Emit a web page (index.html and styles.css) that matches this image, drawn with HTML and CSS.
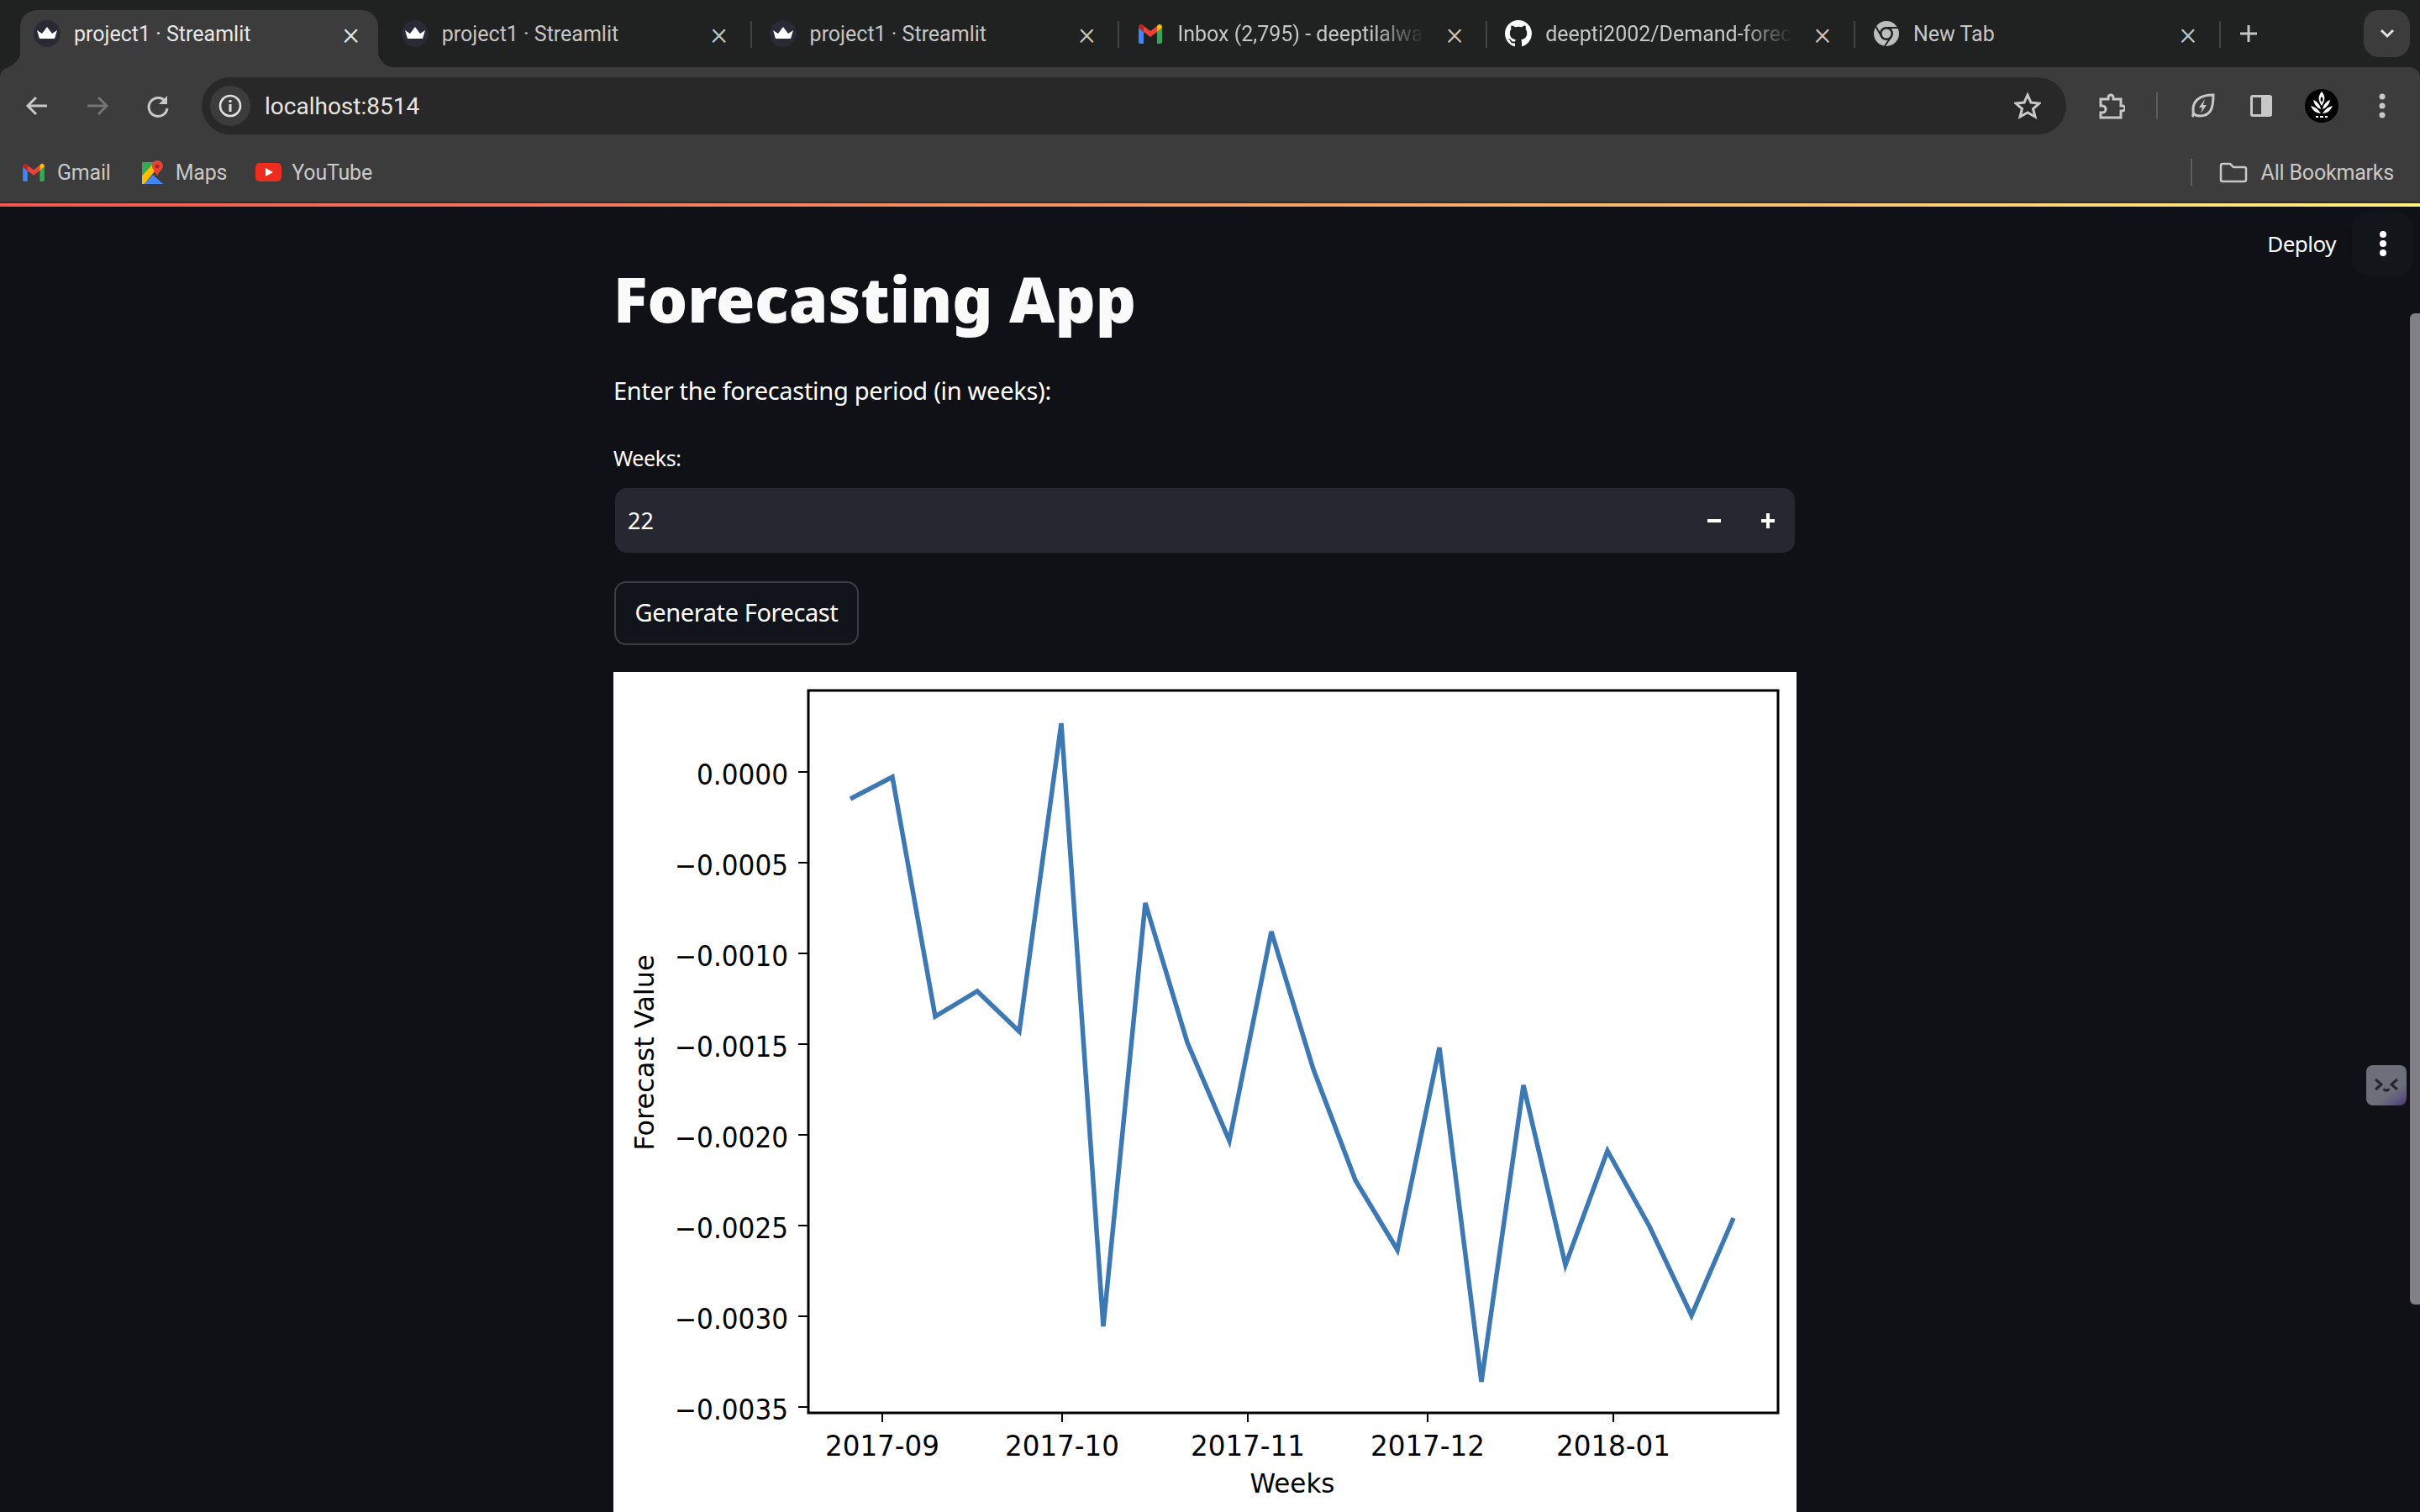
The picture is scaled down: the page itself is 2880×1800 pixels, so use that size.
FILE: index.html
```html
<!DOCTYPE html>
<html lang="en">
<head>
    <meta charset="UTF-8">
    <meta name="viewport" content="width=device-width, initial-scale=1.0">
    <title>project1 · Streamlit</title>
    <link rel="stylesheet" href="styles.css">
</head>
<body>
    <svg class="icon-defs" width="0" height="0">
        <symbol id="crown" viewBox="0 0 32 32">
            <ellipse cx="16" cy="16" rx="16" ry="16" fill="#2a2a36"/>
            <path fill="#fff" d="M4 12l6 4 6-8 6 8 6-4-3 10H7z"/>
        </symbol>
        <symbol id="gmail" viewBox="0 0 28 24">
            <path fill="#4285f4" d="M0 5v17a2 2 0 0 0 2 2h4V10z"/>
            <path fill="#34a853" d="M22 10v14h4a2 2 0 0 0 2-2V5z"/>
            <path fill="#ea4335" d="M6 10l8 6 8-6V3l-8 6-8-6z"/>
            <path fill="#fbbc04" d="M22 3v7l6-5V4c0-2.5-3-4-5-2.5z"/>
            <path fill="#c5221f" d="M0 5l6 5V3L5 1.5C3 0 0 1.5 0 4z"/>
        </symbol>
    </svg>

    <!-- Browser chrome -->
    <header class="browser">
        <div class="tab-strip">
            <div class="tab tab-active">
                <svg class="favicon" width="32" height="32"><use href="#crown"/></svg>
                <span class="tab-title">project1 · Streamlit</span>
                <span class="tab-close">×</span>
            </div>
            <i class="tab-sep tab-sep-hidden"></i>
            <div class="tab">
                <svg class="favicon" width="32" height="32"><use href="#crown"/></svg>
                <span class="tab-title">project1 · Streamlit</span>
                <span class="tab-close">×</span>
            </div>
            <i class="tab-sep"></i>
            <div class="tab">
                <svg class="favicon" width="32" height="32"><use href="#crown"/></svg>
                <span class="tab-title">project1 · Streamlit</span>
                <span class="tab-close">×</span>
            </div>
            <i class="tab-sep"></i>
            <div class="tab">
                <svg class="favicon" width="32" height="24"><use href="#gmail"/></svg>
                <span class="tab-title tab-title-fade">Inbox (2,795) - deeptilalwa</span>
                <span class="tab-close">×</span>
            </div>
            <i class="tab-sep"></i>
            <div class="tab">
                <svg class="favicon" width="32" height="32" viewBox="0 0 16 16">
                    <path fill="#fff" d="M8 0C3.58 0 0 3.58 0 8c0 3.54 2.29 6.53 5.47 7.59.4.07.55-.17.55-.38 0-.19-.01-.82-.01-1.49-2.01.37-2.53-.49-2.69-.94-.09-.23-.48-.94-.82-1.13-.28-.15-.68-.52-.01-.53.63-.01 1.08.58 1.23.82.72 1.21 1.87.87 2.33.66.07-.52.28-.87.51-1.07-1.78-.2-3.64-.89-3.64-3.95 0-.87.31-1.59.82-2.15-.08-.2-.36-1.02.08-2.12 0 0 .67-.21 2.2.82.64-.18 1.32-.27 2-.27s1.36.09 2 .27c1.53-1.04 2.2-.82 2.2-.82.44 1.1.16 1.92.08 2.12.51.56.82 1.27.82 2.15 0 3.07-1.87 3.75-3.65 3.95.29.25.54.73.54 1.48 0 1.07-.01 1.93-.01 2.2 0 .21.15.46.55.38A8.013 8.013 0 0016 8c0-4.42-3.58-8-8-8z"/>
                </svg>
                <span class="tab-title tab-title-fade">deepti2002/Demand-forec</span>
                <span class="tab-close">×</span>
            </div>
            <i class="tab-sep"></i>
            <div class="tab tab-last">
                <svg class="favicon" width="32" height="32" viewBox="0 0 32 32">
                    <circle cx="16" cy="16" r="15" fill="#bdbdbd"/>
                    <path stroke="#202121" stroke-width="2" fill="none" d="M16 9h14M10 19L3 7M22 19l-8 12"/>
                    <circle cx="16" cy="16" r="8" fill="#202121"/>
                    <circle cx="16" cy="16" r="5.5" fill="#bdbdbd"/>
                </svg>
                <span class="tab-title">New Tab</span>
                <span class="tab-close">×</span>
            </div>
            <i class="tab-sep"></i>
            <span class="new-tab">
                <svg width="22" height="22" viewBox="0 0 22 22"><path stroke="#c4c4c4" stroke-width="3" d="M11 1v20M1 11h20"/></svg>
            </span>
            <span class="tab-search">
                <svg width="18" height="12" viewBox="0 0 18 12"><path stroke="#e0e0e0" stroke-width="3" fill="none" d="M2 2l7 7 7-7"/></svg>
            </span>
        </div>

        <div class="toolbar">
            <svg class="nav-icon" width="32" height="32" viewBox="0 0 32 32"><path stroke="#c8c8c8" stroke-width="3" fill="none" d="M28 16H6M15 6L5 16l10 10"/></svg>
            <svg class="nav-icon" width="32" height="32" viewBox="0 0 32 32"><path stroke="#747474" stroke-width="3" fill="none" d="M4 16h22M17 6l10 10-10 10"/></svg>
            <svg class="nav-icon" width="32" height="32" viewBox="0 0 32 32"><path stroke="#c8c8c8" stroke-width="3" fill="none" d="M25 11a11 11 0 1 0 2 8"/><path fill="#c8c8c8" d="M27 4v10H17z"/></svg>
            <div class="omnibox">
                <span class="site-info">
                    <svg width="28" height="28" viewBox="0 0 28 28">
                        <circle cx="14" cy="14" r="12" stroke="#e0e0e0" stroke-width="2.6" fill="none"/>
                        <path stroke="#e0e0e0" stroke-width="3" d="M14 12v9M14 7v3"/>
                    </svg>
                </span>
                <span class="url">localhost:8514</span>
                <svg class="star" width="32" height="32" viewBox="0 0 32 32"><path stroke="#c8c8c8" stroke-width="3" fill="none" d="M16 3l4 9 10 1-7.500 6.500L25 29l-9-5-9 5 2.500-9.500L2 13l10-1z"/></svg>
            </div>
            <div class="toolbar-actions">
                <svg width="32" height="32" viewBox="0 0 32 32"><path stroke="#c8c8c8" stroke-width="3" fill="none" d="M3 8h9V6a3 3 0 0 1 6 0v2h9v8h2a3 3 0 0 1 0 6h-2v8H3v-6h2a4 4 0 0 0 0-8H3z"/></svg>
                <i class="toolbar-sep"></i>
                <svg width="32" height="32" viewBox="0 0 32 32"><path stroke="#c8c8c8" stroke-width="3" fill="none" d="M4 29c2-2 1-4 1-9C5 10 13 3 29 3c0 16-3 25-16 25-4 0-6-1-7-3"/><path fill="#c8c8c8" d="M19 8l-7 10h4l-2 7 7-10h-4z"/></svg>
                <svg width="32" height="32" viewBox="0 0 32 32"><rect x="3" y="3" width="26" height="26" rx="3" fill="#c8c8c8"/><rect x="6" y="6" width="10" height="20" fill="#3c3c3c"/></svg>
                <svg class="avatar" width="40" height="40" viewBox="0 0 40 40">
                    <circle cx="20" cy="20" r="20" fill="#000"/>
                    <path fill="#fff" fill-rule="evenodd" d="M20 3c4 5 5 9 0 17-5-8-4-12 0-17zm0 6c-2 2-2 4 0 7 2-3 2-5 0-7z"/>
                    <path fill="#fff" d="M10 13c5 2 8 6 9 11-5-2-8-6-9-11zm20 0c-5 2-8 6-9 11 5-2 8-6 9-11zM7 20c5 1 9 4 12 9-6 0-10-4-12-9zm26 0c-5 1-9 4-12 9 6 0 10-4 12-9zM13 32h3v2h-3zm5 0h4v2h-4zm6 0h3v2h-3z"/>
                </svg>
                <svg class="toolbar-menu" width="12" height="32" viewBox="0 0 12 32"><circle cx="6" cy="5" r="3.500" fill="#c8c8c8"/><circle cx="6" cy="16" r="3.500" fill="#c8c8c8"/><circle cx="6" cy="27" r="3.500" fill="#c8c8c8"/></svg>
            </div>
        </div>

        <div class="bookmarks">
            <a class="bookmark"><svg width="28" height="22"><use href="#gmail"/></svg>Gmail</a>
            <a class="bookmark bookmark-maps">
                <svg width="26" height="28" viewBox="0 0 26 28">
                    <path fill="#34a853" d="M1 2h15L1 18z"/>
                    <path fill="#fbbc04" d="M1 18L16 2l4 6L4 28H1z"/>
                    <path fill="#4285f4" d="M4 28l10-11 12 11z"/>
                    <path fill="#ea4335" d="M19 0c4 0 7 3 7 6.500 0 4-5 7-7 12-2-5-6-8-6-12C13 3 15 0 19 0z"/>
                    <circle cx="19" cy="7" r="2.500" fill="#a5281b"/>
                </svg>Maps
            </a>
            <a class="bookmark bookmark-yt">
                <svg width="31" height="22" viewBox="0 0 31 22">
                    <rect width="31" height="22" rx="5" fill="#ee2d1f"/>
                    <path fill="#fff" d="M12 6l9 5-9 5z"/>
                </svg>YouTube
            </a>
            <i class="bookmarks-sep"></i>
            <a class="bookmark bookmark-all">
                <svg width="34" height="25" viewBox="0 0 34 25"><path stroke="#c8c8c8" stroke-width="2.500" fill="none" d="M2 4a2 2 0 0 1 2-2h9l4 4h13a2 2 0 0 1 2 2v13a2 2 0 0 1-2 2H4a2 2 0 0 1-2-2z"/></svg>All Bookmarks
            </a>
        </div>
        <div class="decoration"></div>
    </header>

    <!-- Streamlit app -->
    <div class="app">
        <div class="app-header">
            <span class="deploy">Deploy</span>
            <span class="main-menu">
                <svg width="12" height="32" viewBox="0 0 12 32"><circle cx="6" cy="5" r="4" fill="#fff"/><circle cx="6" cy="16" r="4" fill="#fff"/><circle cx="6" cy="27" r="4" fill="#fff"/></svg>
            </span>
        </div>
        <main class="content">
            <h1>Forecasting App</h1>
            <p class="intro">Enter the forecasting period (in weeks):</p>
            <label class="field-label">Weeks:</label>
            <div class="number-input">
                <span class="number-value">22</span>
                <span class="stepper">
                    <svg width="18" height="18" viewBox="0 0 18 18"><path stroke="#fff" stroke-width="4" d="M1 9h16"/></svg>
                    <svg width="18" height="18" viewBox="0 0 18 18"><path stroke="#fff" stroke-width="4" d="M1 9h16M9 0v18"/></svg>
                </span>
            </div>
            <button class="generate">Generate Forecast</button>

            <div class="chart">
                <svg class="plot" width="1408" height="1000" viewBox="730 800 1408 1000">
                    <rect class="axes" x="962" y="822" width="1154" height="860"/>
                    <path class="ticks" d="M950 919h12M950 1027h12M950 1135h12M950 1243h12M950 1351h12M950 1459h12M950 1567h12M950 1675h12M1050 1682v11M1264 1682v11M1485 1682v11M1699 1682v11M1920 1682v11"/>
                    <polyline class="series" points="1012,951 1062,925 1113,1210 1163,1180 1213,1228 1263,861 1313,1579 1363,1075 1413,1241 1463,1358 1513,1109 1563,1273 1613,1405 1663,1488 1713,1247 1763,1645 1813,1292 1863,1506 1913,1370 1963,1460 2013,1566 2063,1450"/>
                    <text class="tick-y" x="938" y="934" textLength="109" lengthAdjust="spacingAndGlyphs">0.0000</text>
                    <text class="tick-y" x="938" y="1042" textLength="135" lengthAdjust="spacingAndGlyphs">−0.0005</text>
                    <text class="tick-y" x="938" y="1150" textLength="135" lengthAdjust="spacingAndGlyphs">−0.0010</text>
                    <text class="tick-y" x="938" y="1258" textLength="135" lengthAdjust="spacingAndGlyphs">−0.0015</text>
                    <text class="tick-y" x="938" y="1366" textLength="135" lengthAdjust="spacingAndGlyphs">−0.0020</text>
                    <text class="tick-y" x="938" y="1474" textLength="135" lengthAdjust="spacingAndGlyphs">−0.0025</text>
                    <text class="tick-y" x="938" y="1582" textLength="135" lengthAdjust="spacingAndGlyphs">−0.0030</text>
                    <text class="tick-y" x="938" y="1690" textLength="135" lengthAdjust="spacingAndGlyphs">−0.0035</text>
                    <text class="tick-x" x="1050" y="1733" textLength="136" lengthAdjust="spacingAndGlyphs">2017-09</text>
                    <text class="tick-x" x="1264" y="1733" textLength="136" lengthAdjust="spacingAndGlyphs">2017-10</text>
                    <text class="tick-x" x="1485" y="1733" textLength="136" lengthAdjust="spacingAndGlyphs">2017-11</text>
                    <text class="tick-x" x="1699" y="1733" textLength="136" lengthAdjust="spacingAndGlyphs">2017-12</text>
                    <text class="tick-x" x="1920" y="1733" textLength="136" lengthAdjust="spacingAndGlyphs">2018-01</text>
                    <text class="axis-label" x="1538" y="1777" textLength="101" lengthAdjust="spacingAndGlyphs">Weeks</text>
                    <text class="axis-label" transform="translate(778 1253) rotate(-90)">Forecast Value</text>
                </svg>
            </div>
        </main>

        <div class="scroll-thumb"></div>
        <div class="badge">
            <svg width="30" height="18" viewBox="0 0 30 18"><path stroke="#25262f" stroke-width="3" fill="none" d="M2 2l7 6-7 6M28 2l-7 6 7 6M12 13c1 3 5 3 6 0"/></svg>
        </div>
    </div>
</body>
</html>
```

FILE: styles.css
```css
* {
    box-sizing: border-box;
}

html, body {
    margin: 0;
    height: 100%;
    overflow: hidden;
}

body {
    background: #0f1116;
    color: #fff;
    font-family: 'Noto Sans', sans-serif;
}

.icon-defs {
    display: block;
    height: 0;
}

/* Browser chrome */
.browser {
    background: #202121;
    font-family: 'Roboto', sans-serif;
}

.tab-strip {
    display: flex;
    align-items: flex-start;
    height: 80px;
    padding: 12px 0 0 24px;
}

.tab {
    position: relative;
    display: flex;
    align-items: center;
    flex: none;
    width: 425.8px;
    height: 56px;
    padding: 0 22px 0 16px;
    font-size: 25px;
    color: #c6c6c6;
}

.tab-last {
    width: 423px;
}

.tab-active {
    height: 68px;
    padding-bottom: 12px;
    background: #3c3c3c;
    border-radius: 20px 20px 0 0;
    color: #e8e8e8;
}

.tab-active::before,
.tab-active::after {
    content: "";
    position: absolute;
    bottom: 0;
    width: 20px;
    height: 20px;
}

.tab-active::before {
    left: -20px;
    background: radial-gradient(circle at 0 0, transparent 20px, #3c3c3c 20.5px);
}

.tab-active::after {
    right: -20px;
    background: radial-gradient(circle at 100% 0, transparent 20px, #3c3c3c 20.5px);
}

.favicon {
    flex: none;
}

.tab-title {
    flex: 1;
    margin: 0 20px 0 16px;
    overflow: hidden;
    white-space: nowrap;
}

.tab-title-fade {
    -webkit-mask-image: linear-gradient(90deg, #000 78%, transparent 98%);
    mask-image: linear-gradient(90deg, #000 78%, transparent 98%);
}

.tab-close {
    flex: none;
    width: 20px;
    font-size: 38px;
    line-height: 20px;
    text-align: center;
    font-weight: 300;
}

.tab-sep {
    flex: none;
    width: 2px;
    height: 32px;
    margin: 13px 5px 0;
    background: #434343;
}

.tab-sep-hidden {
    background: transparent;
}

.new-tab {
    display: flex;
    align-items: center;
    height: 56px;
    margin-left: 17px;
}

.tab-search {
    display: flex;
    align-items: center;
    justify-content: center;
    width: 55px;
    height: 56px;
    margin-left: auto;
    margin-right: 12px;
    background: #3c3c3c;
    border-radius: 18px;
}

.toolbar {
    display: flex;
    align-items: center;
    height: 92px;
    padding: 12px 0 12px 28px;
    background: #3c3c3c;
    border-radius: 12px 12px 0 0;
}

.nav-icon {
    flex: none;
    margin-right: 40px;
}

.nav-icon:nth-child(3) {
    margin-right: 36px;
}

.omnibox {
    display: flex;
    align-items: center;
    flex: none;
    width: 2219px;
    height: 68px;
    padding: 0 30px 0 10px;
    background: #282828;
    border-radius: 34px;
}

.site-info {
    display: flex;
    align-items: center;
    justify-content: center;
    width: 48px;
    height: 48px;
    background: #3c3c3c;
    border-radius: 50%;
}

.url {
    flex: 1;
    margin-left: 17px;
    font-size: 28px;
    color: #e6e6e6;
}

.toolbar-actions {
    display: flex;
    align-items: center;
    gap: 38px;
    padding-left: 38px;
}

.toolbar-sep {
    width: 2px;
    height: 32px;
    margin: 0 -1px;
    background: #5c5c5c;
}

.avatar {
    margin-left: -2px;
}

.toolbar-menu {
    margin-left: 8px;
}

.bookmarks {
    display: flex;
    align-items: center;
    height: 68px;
    padding: 0 31px 2px 26px;
    background: #3c3c3c;
}

.bookmark {
    display: flex;
    align-items: center;
    gap: 14px;
    font-size: 25px;
    letter-spacing: -0.2px;
    color: #c8c8c8;
}

.bookmark-maps {
    margin-left: 36px;
    gap: 15px;
}

.bookmark-yt {
    margin-left: 34px;
    gap: 12px;
}

.bookmarks-sep {
    width: 2px;
    height: 32px;
    margin-left: auto;
    margin-right: 32px;
    background: #5c5c5c;
}

.bookmark-all {
    gap: 16px;
}

.decoration {
    height: 6px;
    border-top: 2px solid #2c2c2c;
    background: linear-gradient(90deg, #f0584f, #f6a268 55%, #fff07f);
}

/* Streamlit app */
.app {
    position: relative;
    padding-right: 12px;
}

.app-header {
    display: flex;
    justify-content: flex-end;
    align-items: center;
    height: 82px;
    margin-right: -4px;
    padding-top: 6px;
}

.deploy {
    margin-right: 19px;
    font-size: 26px;
    letter-spacing: -0.5px;
}

.main-menu {
    display: flex;
    align-items: center;
    justify-content: center;
    width: 73px;
    height: 76px;
    background: #12151a;
    border-radius: 20px;
}

.content {
    width: 1408px;
    margin: 0 auto;
}

h1 {
    margin: -4px 0 0;
    font-size: 75px;
    line-height: 62px;
    font-weight: 900;
    color: #fafafa;
}

.intro {
    margin: 61px 0 0;
    font-size: 29px;
    line-height: 36px;
    letter-spacing: -0.3px;
}

.field-label {
    display: block;
    margin-top: 46px;
    font-size: 25px;
    line-height: 32px;
    letter-spacing: -0.4px;
}

.number-input {
    display: flex;
    align-items: center;
    justify-content: space-between;
    width: 1404px;
    height: 77px;
    margin: 20px 0 0 2px;
    padding: 0 23px 0 15px;
    background: #262730;
    border-radius: 14px;
}

.number-value {
    font-size: 27px;
}

.stepper {
    display: flex;
    gap: 46px;
}

.generate {
    display: block;
    width: 291px;
    height: 76px;
    margin: 34px 0 0 1px;
    padding-bottom: 4px;
    background: #11141a;
    border: 2px solid #3b3d45;
    border-radius: 14px;
    color: #fff;
    font: inherit;
    font-size: 29px;
    letter-spacing: -0.4px;
}

.chart {
    margin-top: 32px;
    background: #fff;
}

.plot {
    display: block;
}

.axes {
    fill: #fff;
    stroke: #000;
    stroke-width: 3;
}

.ticks {
    stroke: #000;
    stroke-width: 2;
    fill: none;
}

.series {
    fill: none;
    stroke: #3b78b4;
    stroke-width: 5.5;
    stroke-linejoin: miter;
}

.tick-y, .tick-x, .axis-label {
    font-family: 'DejaVu Sans', sans-serif;
    font-size: 32px;
    fill: #000;
}

.tick-y, .tick-x {
    font-size: 33px;
}

.tick-y {
    text-anchor: end;
}

.tick-x, .axis-label {
    text-anchor: middle;
}

.scroll-thumb {
    position: absolute;
    top: 127px;
    right: 0;
    width: 12px;
    height: 1180px;
    background: #808085;
    border-radius: 6px 0 0 6px;
}

.badge {
    position: absolute;
    top: 1022px;
    right: 16px;
    display: flex;
    align-items: center;
    justify-content: center;
    width: 48px;
    height: 48px;
    background: linear-gradient(145deg, #6d6f7a 65%, #5f5a7c 82%, #4a2c80);
    border-radius: 8px;
}
```
